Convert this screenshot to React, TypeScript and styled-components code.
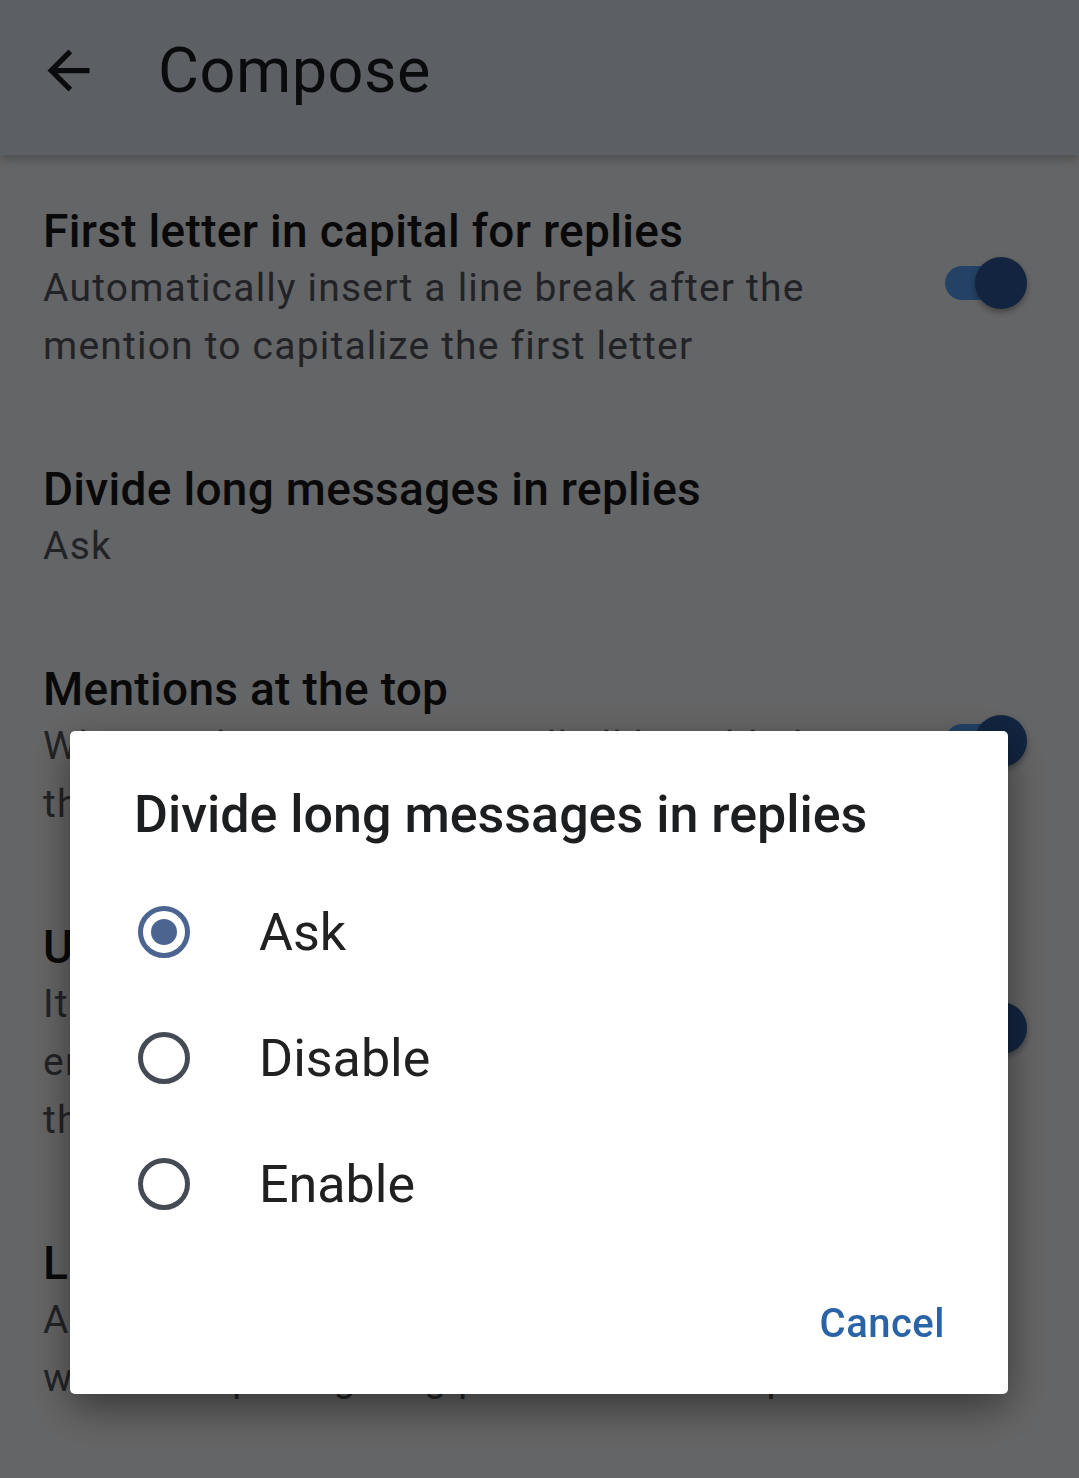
import React from 'react';
import styled, { createGlobalStyle } from 'styled-components';

const GlobalStyle = createGlobalStyle`
  html, body {
    margin: 0;
    padding: 0;
  }
  body {
    background: #fbfcff;
    font-family: Roboto, "Liberation Sans", sans-serif;
    -webkit-font-smoothing: antialiased;
  }
`;

const Screen = styled.div`
  width: 1079px;
  height: 1478px;
  overflow: hidden;
  background: #fbfcff;
`;

const AppBar = styled.header`
  position: relative;
  z-index: 1;
  height: 155px;
  box-sizing: border-box;
  display: flex;
  align-items: center;
  padding: 0 0 14px 37px;
  gap: 58px;
  background: #e7eefb;
  box-shadow: 0 3px 10px rgba(0, 0, 0, 0.28);
`;

const BackButton = styled.button`
  width: 63px;
  height: 63px;
  padding: 0;
  border: none;
  background: none;
  display: flex;
  color: #1a1c1e;
`;

const AppTitle = styled.h1`
  margin: 0;
  font-size: 63px;
  font-weight: 400;
  color: #1a1c1e;
  letter-spacing: 0.5px;
`;

const PrefList = styled.div`
  display: flex;
  flex-direction: column;
`;

const PrefRow = styled.div`
  display: flex;
  align-items: center;
  padding: 48px 52px 38px 43px;
`;

const PrefText = styled.div`
  flex: 1;
  min-width: 0;
`;

const PrefTitle = styled.div`
  font-size: 46px;
  line-height: 56px;
  font-weight: 500;
  letter-spacing: 0.3px;
  color: #17181a;
`;

const PrefSummary = styled.div`
  font-size: 39px;
  line-height: 58px;
  letter-spacing: 1.2px;
  color: #55595f;
  white-space: pre-line;
`;

const Switch = styled.div`
  position: relative;
  flex-shrink: 0;
  width: 82px;
  height: 52px;
  margin: 0 0 12px 40px;
`;

const SwitchTrack = styled.span`
  position: absolute;
  left: 0;
  top: 9px;
  width: 64px;
  height: 34px;
  border-radius: 17px;
  background: #58a5ff;
`;

const SwitchThumb = styled.span`
  position: absolute;
  right: 0;
  top: 0;
  width: 52px;
  height: 52px;
  border-radius: 50%;
  background: #2d5b9f;
  box-shadow: 0 3px 6px rgba(0, 0, 0, 0.35);
`;

const Scrim = styled.div`
  position: fixed;
  inset: 0;
  z-index: 10;
  background: rgba(0, 0, 0, 0.6);
  display: flex;
  flex-direction: column;
  align-items: center;
  padding: 731px 1px 0 0;
  box-sizing: border-box;
`;

const Dialog = styled.div`
  width: 938px;
  background: #ffffff;
  border-radius: 5px;
  box-shadow: 0 14px 40px rgba(0, 0, 0, 0.45);
  padding-top: 52px;
`;

const DialogTitle = styled.h2`
  margin: 0;
  padding: 0 64px;
  font-size: 52px;
  line-height: 64px;
  font-weight: 500;
  color: #1d1e20;
`;

const OptionList = styled.div`
  margin-top: 22px;
  display: flex;
  flex-direction: column;
`;

const OptionRow = styled.label`
  height: 126px;
  display: flex;
  align-items: center;
  padding-left: 68px;
  cursor: pointer;
`;

const Radio = styled.span<{ checked: boolean }>`
  position: relative;
  width: 52px;
  height: 52px;
  box-sizing: border-box;
  border-radius: 50%;
  border: 5px solid ${p => (p.checked ? '#4b6590' : '#454b55')};

  &::after {
    content: '';
    display: ${p => (p.checked ? 'block' : 'none')};
    position: absolute;
    left: 8px;
    top: 8px;
    width: 26px;
    height: 26px;
    border-radius: 50%;
    background: #4b6590;
  }
`;

const OptionLabel = styled.span`
  margin-left: 69px;
  font-size: 52px;
  color: #212121;
`;

const ButtonRow = styled.div`
  display: flex;
  justify-content: flex-end;
  padding: 40px 40px 35px;
`;

const TextButton = styled.button`
  height: 72px;
  padding: 0 23px;
  border: none;
  background: none;
  font-family: Roboto, "Liberation Sans", sans-serif;
  font-size: 40px;
  font-weight: 500;
  letter-spacing: 0.5px;
  color: #2a64a6;
`;

const prefs = [
  {
    title: 'First letter in capital for replies',
    summary: 'Automatically insert a line break after the\nmention to capitalize the first letter',
    toggle: true,
  },
  {
    title: 'Divide long messages in replies',
    summary: 'Ask',
    toggle: false,
  },
  {
    title: 'Mentions at the top',
    summary: 'When replying, mentions will all be added at\nthe beginning of the message',
    toggle: true,
  },
  {
    title: 'Unlisted replies',
    summary: 'It only concerns replies. When you enable it,\nentire threads will automatically be sent with\nthe unlisted visibility',
    toggle: true,
  },
  {
    title: 'Link previews',
    summary: 'Add a card to show the content of links\nwhen composing long posts in the composer',
    toggle: false,
  },
];

const options = ['Ask', 'Disable', 'Enable'];

const ArrowBack = () => (
  <svg width="63" height="63" viewBox="0 0 24 24" fill="currentColor">
    <path d="M20 11H7.83l5.59-5.59L12 4l-8 8 8 8 1.41-1.41L7.83 13H20v-2z" />
  </svg>
);

export default function App() {
  const selected = 'Ask';
  return (
    <Screen>
      <GlobalStyle />
      <AppBar>
        <BackButton aria-label="Back">
          <ArrowBack />
        </BackButton>
        <AppTitle>Compose</AppTitle>
      </AppBar>
      <PrefList>
        {prefs.map(pref => (
          <PrefRow key={pref.title}>
            <PrefText>
              <PrefTitle>{pref.title}</PrefTitle>
              <PrefSummary>{pref.summary}</PrefSummary>
            </PrefText>
            {pref.toggle && (
              <Switch>
                <SwitchTrack />
                <SwitchThumb />
              </Switch>
            )}
          </PrefRow>
        ))}
      </PrefList>
      <Scrim>
        <Dialog>
          <DialogTitle>Divide long messages in replies</DialogTitle>
          <OptionList>
            {options.map(option => (
              <OptionRow key={option}>
                <Radio checked={option === selected} />
                <OptionLabel>{option}</OptionLabel>
              </OptionRow>
            ))}
          </OptionList>
          <ButtonRow>
            <TextButton>Cancel</TextButton>
          </ButtonRow>
        </Dialog>
      </Scrim>
    </Screen>
  );
}
